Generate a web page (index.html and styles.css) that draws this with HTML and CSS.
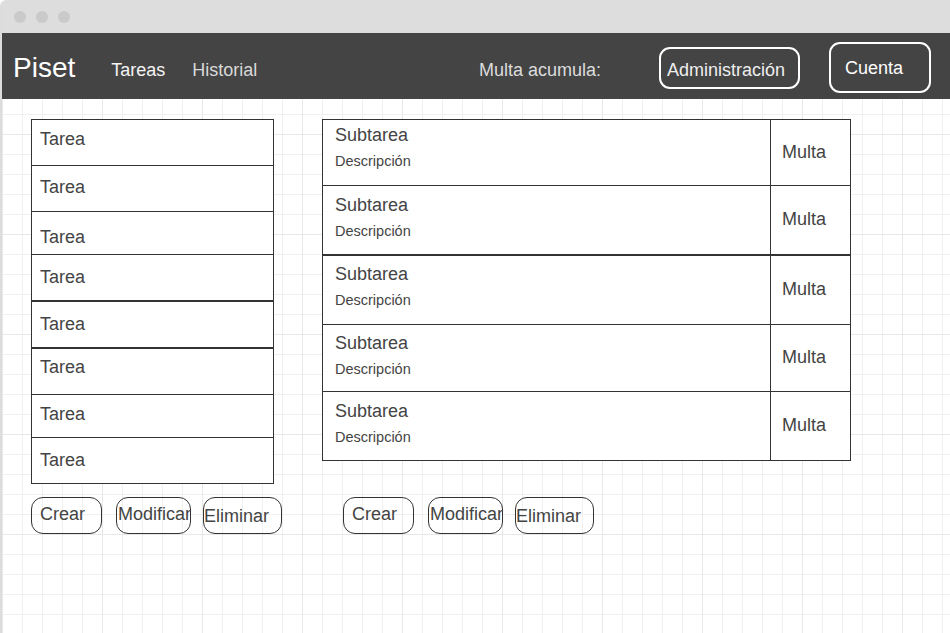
FILE: index.html
```html
<!DOCTYPE html>
<html lang="es">
<head>
  <meta charset="UTF-8" />
  <title>Piset</title>
  <meta name="viewport" content="width=device-width, initial-scale=1.0" />
  <link rel="stylesheet" href="styles.css">
</head>
<body>
  <div class="window">
    <div class="titlebar">
      <span class="dot"></span>
      <span class="dot"></span>
      <span class="dot"></span>
    </div>

    <header class="topbar">
      <span class="logo">Piset</span>
      <nav class="nav">
        <a class="nav-link active">Tareas</a>
        <a class="nav-link">Historial</a>
      </nav>
      <span class="fine-total">Multa acumula:</span>
      <button class="top-btn admin-btn">Administración</button>
      <button class="top-btn account-btn">Cuenta</button>
    </header>

    <main class="canvas">
      <ul class="task-list">
        <li class="task-item">Tarea</li>
        <li class="task-item">Tarea</li>
        <li class="task-item">Tarea</li>
        <li class="task-item">Tarea</li>
        <li class="task-item">Tarea</li>
        <li class="task-item">Tarea</li>
        <li class="task-item">Tarea</li>
        <li class="task-item">Tarea</li>
      </ul>

      <div class="subtask-table">
        <div class="subtask-row">
          <div class="subtask-info">
            <div class="subtask-title">Subtarea</div>
            <div class="subtask-desc">Descripción</div>
          </div>
          <div class="subtask-fine">Multa</div>
        </div>
        <div class="subtask-row">
          <div class="subtask-info">
            <div class="subtask-title">Subtarea</div>
            <div class="subtask-desc">Descripción</div>
          </div>
          <div class="subtask-fine">Multa</div>
        </div>
        <div class="subtask-row">
          <div class="subtask-info">
            <div class="subtask-title">Subtarea</div>
            <div class="subtask-desc">Descripción</div>
          </div>
          <div class="subtask-fine">Multa</div>
        </div>
        <div class="subtask-row">
          <div class="subtask-info">
            <div class="subtask-title">Subtarea</div>
            <div class="subtask-desc">Descripción</div>
          </div>
          <div class="subtask-fine">Multa</div>
        </div>
        <div class="subtask-row">
          <div class="subtask-info">
            <div class="subtask-title">Subtarea</div>
            <div class="subtask-desc">Descripción</div>
          </div>
          <div class="subtask-fine">Multa</div>
        </div>
      </div>

      <div class="actions">
        <button class="act-btn btn-create">Crear</button>
        <button class="act-btn btn-edit">Modificar</button>
        <button class="act-btn btn-delete">Eliminar</button>
      </div>

      <div class="actions actions-right">
        <button class="act-btn btn-create">Crear</button>
        <button class="act-btn btn-edit">Modificar</button>
        <button class="act-btn btn-delete">Eliminar</button>
      </div>
    </main>
  </div>
</body>
</html>
```

FILE: styles.css
```css
* {
  box-sizing: border-box;
}
body {
  margin: 0;
  font-family: 'Liberation Sans', Arial, sans-serif;
  background-color: #fff;
  color: #444;
}
.window {
  height: 633px;
  border-left: 2px solid #dcdcdc;
  border-top-left-radius: 6px;
  overflow: hidden;
  display: flex;
  flex-direction: column;
}
.titlebar {
  height: 33px;
  background-color: #dddddd;
  display: flex;
  align-items: center;
  gap: 10px;
  padding-left: 12px;
}
.dot {
  width: 12px;
  height: 12px;
  border-radius: 50%;
  background-color: #cacaca;
}
.topbar {
  height: 66px;
  background-color: #444;
  display: flex;
  align-items: center;
  padding: 0 19px 0 11px;
}
.logo {
  font-size: 28px;
  line-height: 28px;
  color: #fff;
  margin-top: 3px;
}
.nav {
  display: flex;
  gap: 27px;
  margin-left: 36px;
  margin-top: 8px;
}
.nav-link {
  font-size: 18px;
  line-height: 18px;
  color: #d9d9d9;
}
.nav-link.active {
  color: #f4f4f4;
}
.fine-total {
  margin-left: auto;
  margin-top: 7px;
  font-size: 18px;
  line-height: 18px;
  color: #dcdcdc;
}
.top-btn {
  flex-shrink: 0;
  font-family: inherit;
  font-size: 18px;
  line-height: 18px;
  background: none;
  border: 2px solid #fff;
  border-radius: 11px;
  text-align: left;
  white-space: nowrap;
}
.admin-btn {
  width: 141px;
  margin-left: 58px;
  margin-top: 3px;
  padding: 12px 0 8px 6px;
  color: #eee;
}
.account-btn {
  width: 102px;
  margin-left: 29px;
  margin-top: 2px;
  padding: 15px 0 14px 14px;
  color: #fff;
}
.canvas {
  flex: 1;
  display: grid;
  grid-template-columns: 243px 529px;
  column-gap: 48px;
  row-gap: 13px;
  align-items: start;
  align-content: start;
  padding: 20px 0 0 29px;
  background-color: #fff;
  background-image:
    linear-gradient(to right, #e8e8e8 1px, transparent 1px),
    linear-gradient(to bottom, #e8e8e8 1px, transparent 1px),
    linear-gradient(to right, #f0f0f0 1px, transparent 1px),
    linear-gradient(to bottom, #f0f0f0 1px, transparent 1px);
  background-size: 100px 100px, 100px 100px, 20px 20px, 20px 20px;
  background-position: 0 0, 0 35px, 0 0, 0 15px;
}
.task-list {
  list-style: none;
  margin: 0;
  padding: 0;
  border: 1px solid #333;
  background-color: #fff;
}
.task-item {
  font-size: 18px;
  line-height: 18px;
  padding-left: 8px;
  border-bottom: 1px solid #333;
}
.task-item:nth-child(1) { height: 46px; padding-top: 10px; }
.task-item:nth-child(2) { height: 46px; padding-top: 12px; }
.task-item:nth-child(3) { height: 43px; padding-top: 16px; }
.task-item:nth-child(4) { height: 47px; padding-top: 13px; border-bottom-width: 2px; }
.task-item:nth-child(5) { height: 47px; padding-top: 13px; border-bottom-width: 2px; }
.task-item:nth-child(6) { height: 46px; padding-top: 9px; }
.task-item:nth-child(7) { height: 43px; padding-top: 10px; }
.task-item:nth-child(8) { height: 45px; padding-top: 13px; border-bottom: none; }
.subtask-table {
  border: 1px solid #333;
  background-color: #fff;
}
.subtask-row {
  display: grid;
  grid-template-columns: 1fr 80px;
  border-bottom: 1px solid #333;
}
.subtask-row:nth-child(1) { height: 66px; }
.subtask-row:nth-child(2) { height: 70px; border-bottom-width: 2px; }
.subtask-row:nth-child(3) { height: 69px; }
.subtask-row:nth-child(4) { height: 67px; }
.subtask-row:nth-child(5) { height: 68px; border-bottom: none; }
.subtask-info {
  padding: 9px 0 0 12px;
}
.subtask-row:nth-child(1) .subtask-info { padding-top: 6px; }
.subtask-row:nth-child(2) .subtask-info,
.subtask-row:nth-child(5) .subtask-info { padding-top: 10px; }
.subtask-title {
  font-size: 18px;
  line-height: 18px;
}
.subtask-desc {
  font-size: 14.5px;
  line-height: 14px;
  margin-top: 10px;
}
.subtask-fine {
  border-left: 1px solid #333;
  display: flex;
  align-items: center;
  padding: 0 0 2px 11px;
  font-size: 18px;
  line-height: 18px;
}
.actions {
  display: flex;
}
.actions-right {
  padding-left: 21px;
}
.act-btn {
  flex-shrink: 0;
  font-family: inherit;
  font-size: 18px;
  line-height: 18px;
  color: #444;
  background: none;
  border: 1px solid #333;
  border-radius: 12px;
  text-align: left;
  white-space: nowrap;
  padding: 7px 0 10px 8px;
}
.btn-create {
  width: 71px;
}
.btn-edit {
  width: 75px;
  margin-left: 14px;
  padding-left: 1px;
}
.btn-delete {
  width: 79px;
  margin-left: 12px;
  padding: 9px 0 8px 0;
}
```
